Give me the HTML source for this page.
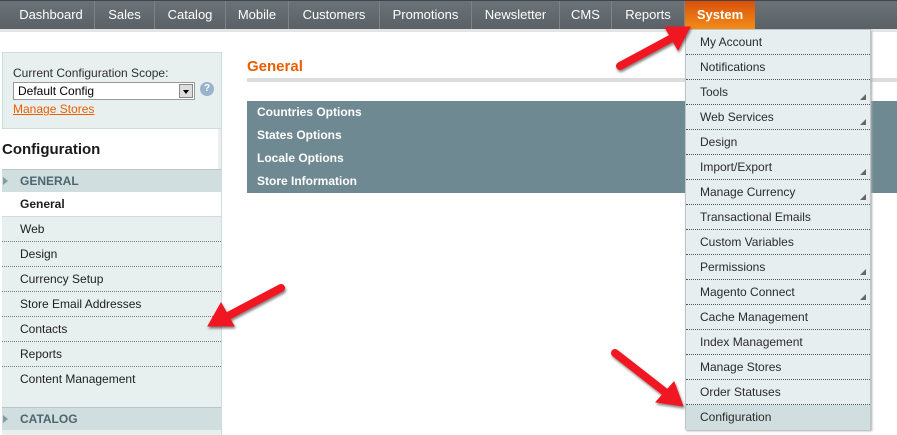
<!DOCTYPE html>
<html><head><style>
*{margin:0;padding:0;box-sizing:border-box}
body{width:897px;height:435px;overflow:hidden;background:#fff;font-family:"Liberation Sans",Arial,sans-serif;position:relative}
.nav{position:absolute;left:0;top:0;width:897px;height:29px;background:linear-gradient(#6b7378,#5a6166);border-top:1px solid #3f4548}
.nav span{position:absolute;top:0;height:28px;line-height:28px;color:#fff;font-size:13px;text-align:center;border-right:1px solid #7c8488}
.sys{background:linear-gradient(#d9510a,#f28c18);font-weight:bold}
.under{position:absolute;top:29px;left:0;width:897px;height:3px;background:#e4e4e4}
.scope{position:absolute;left:2px;top:52px;width:220px;height:77px;background:#e7efef;border:1px solid #cddddd;font-size:12px;color:#2f2f2f}
.sel{position:absolute;left:10px;top:29px;width:182px;height:18px;border:1px solid #999;background:#fff;font-size:12px;line-height:16px;padding-left:4px;color:#000}
.sel i{position:absolute;right:1px;top:1px;width:14px;height:14px;background:#ddd;border:1px solid #888}
.sel i:after{content:"";position:absolute;left:3px;top:5px;border:3px solid transparent;border-top:4px solid #000}
.help{position:absolute;left:197px;top:29px;width:14px;height:14px;border-radius:50%;background:#9ab3cc;color:#fff;font-size:10px;text-align:center;line-height:14px;font-weight:bold}
.left{position:absolute;left:2px;top:129px;width:220px;height:306px;background:#e7efef;border-right:1px solid #cddddd}
.conf{height:40px;background:#fff;font-weight:bold;font-size:15px;line-height:42px;color:#1a1a1a;border-right:3px solid #eee}
.hd{height:23px;background:#d1dedf;border-top:1px solid #b8c6c8;font-weight:bold;font-size:12px;color:#4c6670;line-height:22px;padding-left:18px;position:relative}
.hd:before{content:"";position:absolute;left:1px;top:7px;border:4px solid transparent;border-left:5px solid #7f9ba5}
.it{height:25px;line-height:24px;font-size:12px;color:#1e1e1e;padding-left:18px;border-bottom:1px dotted #777}
.title{position:absolute;left:247px;top:58px;color:#eb5e00;font-weight:bold;font-size:15px}
.line{position:absolute;left:247px;top:78px;width:650px;height:4px;background:#ddd}
.sec{position:absolute;left:247px;width:650px;height:23px;background:#6f8992;color:#fff;font-weight:bold;font-size:12px;line-height:22px;padding-left:10px}
.dd{position:absolute;left:685px;top:29px;width:186px;height:400px;background:#e6eef0;border:1px solid #bcc6c9;box-shadow:1px 2px 2px #aaa}
.dd div{height:25px;line-height:24px;font-size:12px;color:#2b2b2b;padding-left:14px;border-bottom:1px dotted #555;position:relative}
.dd div.s:after{content:"";position:absolute;right:4px;bottom:4px;border:3px solid transparent;border-right-color:#666;border-bottom-color:#666}
</style></head><body>
<div class="nav">
<span style="left:8px;width:87px">Dashboard</span><span style="left:95px;width:60px">Sales</span><span style="left:155px;width:71px">Catalog</span><span style="left:226px;width:63px">Mobile</span><span style="left:289px;width:91px">Customers</span><span style="left:380px;width:92px">Promotions</span><span style="left:472px;width:88px">Newsletter</span><span style="left:560px;width:52px">CMS</span><span style="left:612px;width:73px">Reports</span><span class="sys" style="left:685px;width:70px;border:none">System</span>
</div>
<div class="under"></div>
<div class="scope"><div style="position:absolute;left:10px;top:13px">Current Configuration Scope:</div>
<div class="sel">Default Config<i></i></div><div class="help">?</div>
<div style="position:absolute;left:10px;top:49px;color:#eb5e00;text-decoration:underline">Manage Stores</div></div>
<div class="left">
<div class="conf">Configuration</div>
<div class="hd">GENERAL</div>
<div class="it" style="background:#fff;font-weight:bold;border-bottom:1px solid #cddddd">General</div>
<div class="it">Web</div><div class="it">Design</div><div class="it">Currency Setup</div><div class="it">Store Email Addresses</div><div class="it">Contacts</div><div class="it">Reports</div><div class="it" style="border:none;height:40px">Content Management</div>
<div class="hd">CATALOG</div>
</div>
<div class="title">General</div><div class="line"></div>
<div class="sec" style="top:101px">Countries Options</div>
<div class="sec" style="top:124px">States Options</div>
<div class="sec" style="top:147px">Locale Options</div>
<div class="sec" style="top:170px">Store Information</div>
<div class="dd">
<div>My Account</div><div>Notifications</div><div class="s">Tools</div><div class="s">Web Services</div><div>Design</div><div class="s">Import/Export</div><div class="s">Manage Currency</div><div>Transactional Emails</div><div>Custom Variables</div><div class="s">Permissions</div><div class="s">Magento Connect</div><div>Cache Management</div><div>Index Management</div><div>Manage Stores</div><div>Order Statuses</div><div style="background:#d1dedf;border:none">Configuration</div>
</div>
<svg width="897" height="435" style="position:absolute;left:0;top:0">
<defs><filter id="sh"><feDropShadow dx="1" dy="2" stdDeviation="1.2" flood-opacity="0.5"/></filter></defs>
<g fill="#f01820" stroke="#f01820" filter="url(#sh)">
<line x1="620" y1="66" x2="672" y2="38" stroke-width="8" stroke-linecap="round"/>
<polygon points="690,27 665,27 678,50"/>
<line x1="281" y1="288" x2="228" y2="316" stroke-width="8" stroke-linecap="round"/>
<polygon points="208,326 234,326 221,303"/>
<line x1="615" y1="353" x2="665" y2="392" stroke-width="8" stroke-linecap="round"/>
<polygon points="683,406 674,382 656,402"/>
</g></svg>
</body></html>
